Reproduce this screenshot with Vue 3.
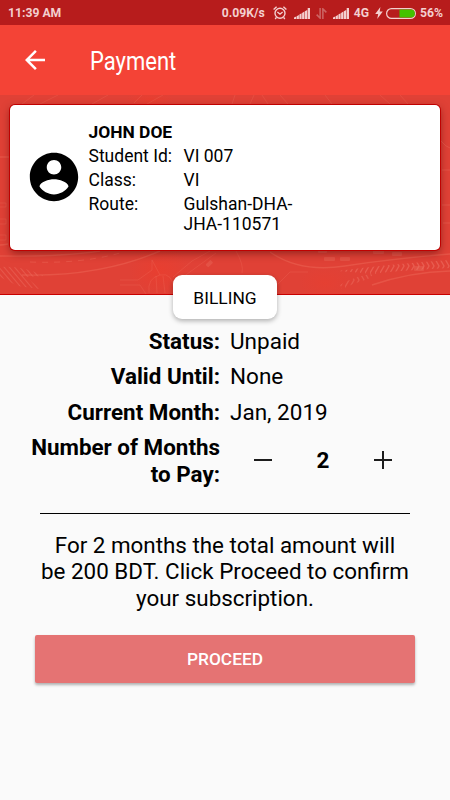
<template>
  <div class="screen">
    <div class="status-bar">
      <span class="time">11:39 AM</span>
      <div class="status-icons">
        <span class="speed">0.09K/s</span>
        <svg class="alarm" viewBox="0 0 14 14" fill="none" stroke="#f3cfcf" stroke-width="1.4">
          <circle cx="7" cy="7.3" r="5" />
          <path d="M4.4 6 7 8.2 9.6 6M.6 3.5 3.6.8M13.4 3.5 10.4.8M3.4 11.4 2.2 13M10.6 11.4 11.8 13" />
        </svg>
        <svg class="signal" viewBox="0 0 16 11" fill="#f3cfcf">
          <path d="M0 11V9.6L2.2 8.6V11zM2.7 11V8.2L4.9 7V11zM5.4 11V6.6L7.6 5.3V11zM8.1 11V4.9L10.4 3.6V11zM10.9 11V3.2L13.2 1.9V11zM13.7 11V0H16V11z" />
        </svg>
        <svg class="data" viewBox="0 0 12 12" fill="none" stroke="#cc6463" stroke-width="1.7">
          <path d="M4.5 0V11L.7 7.2M7.5 12V1L11.3 4.8" />
        </svg>
        <svg class="signal" viewBox="0 0 16 11" fill="#f3cfcf">
          <path d="M0 11V9.6L2.2 8.6V11zM2.7 11V8.2L4.9 7V11zM5.4 11V6.6L7.6 5.3V11zM8.1 11V4.9L10.4 3.6V11zM10.9 11V3.2L13.2 1.9V11zM13.7 11V0H16V11z" />
        </svg>
        <span class="network">4G</span>
        <svg class="bolt" viewBox="0 0 8 12" fill="#f3cfcf">
          <path d="M5.4 0 .2 7H3.2L2.2 12 7.8 4.6H4.7z" />
        </svg>
        <svg class="battery" viewBox="0 0 30 11">
          <rect x=".6" y=".6" width="28.8" height="9.8" rx="4.9" fill="none" stroke="#f3cfcf" stroke-width="1.2" />
          <path d="M13.5 1.6H25a3.9 3.9 0 0 1 0 7.8H13.5z" fill="#43c300" />
        </svg>
        <span class="percent">56%</span>
      </div>
    </div>

    <header class="toolbar">
      <svg class="back" viewBox="0 0 24 24" fill="#fff">
        <path d="M20 11H7.83l5.59-5.59L12 4l-8 8 8 8 1.41-1.41L7.83 13H20v-2z" />
      </svg>
      <h1>Payment</h1>
    </header>

    <section class="banner">
      <!-- faint road map drawn behind the student card -->
      <svg class="roads" viewBox="0 0 450 200" fill="none">
        <defs>
          <pattern id="chevrons" width="5" height="14" patternUnits="userSpaceOnUse" patternTransform="translate(0 164)">
            <path d="M0 0 4 7 0 14" fill="none" stroke="#f0796a" stroke-width="1.3" />
          </pattern>
          <pattern id="hatch" width="4" height="4" patternUnits="userSpaceOnUse" patternTransform="rotate(-40)">
            <path d="M0 0V4" stroke="#f0796a" stroke-width="1.6" />
          </pattern>
          <radialGradient id="glow">
            <stop offset="0" stop-color="#f03c2a" stop-opacity=".5" />
            <stop offset="1" stop-color="#f03c2a" stop-opacity="0" />
          </radialGradient>
        </defs>
        <ellipse cx="160" cy="176" rx="30" ry="26" fill="url(#glow)" />
        <ellipse cx="325" cy="188" rx="26" ry="16" fill="url(#glow)" opacity=".6" />
        <ellipse cx="150" cy="5" rx="24" ry="9" fill="url(#glow)" />
        <path d="M0 172Q22 170 44 181L26 182 40 194 18 191 0 182z" fill="url(#hatch)" opacity=".5" />
        <path d="M338 176Q390 169 450 165V173Q390 176 374 179z" fill="url(#chevrons)" opacity=".5" />
        <path d="M340 190Q356 180 374 179L368 184Q354 188 342 194z" fill="url(#chevrons)" opacity=".4" />
        <g stroke="#f0705f" stroke-opacity=".4">
          <path d="M0 62H10M0 150Q3 150 8 149M0 161Q60 162 100 156M22 180Q100 182 160 156" stroke-width="1.4" />
          <path d="M30 167Q80 169 120 158" stroke-dasharray="6 6" />
          <path d="M270 157Q300 178 345 171T450 159M372 190Q410 177 450 176" stroke-width="1.4" />
          <path d="M441 46Q446 52 450 53M442 75H450M442 110H450M443 128H450" />
        </g>
        <g stroke="#f0705f" stroke-opacity=".28">
          <path d="M120 185H138L152 175V165M120 190H140L146 199M152 165 160 180M173 182 192 166 210 156M183 182 216 158M236 156Q244 170 242 178M278 189 290 177 308 177" />
          <path d="M149 198Q147 183 160 180T174 196M157 198 156 181M165 198 163 181" />
          <path d="M22 9 34 0M40 9 58 0M92 9 108 0M134 8 142 0M147 9 163 0M232 9 235 0M250 9 254 0M262 0 268 9M280 0 288 9M325 0 332 9M380 0 390 9M400 0 408 9" />
          <path d="M0 108H6V112H0M0 124H6V129H0M0 140H6V145H0" />
        </g>
        <g fill="#f0796a" fill-opacity=".3">
          <rect x="304" y="153" width="8" height="3" rx="1" />
          <rect x="318" y="154" width="9" height="4" rx="1" />
          <rect x="324" y="162" width="11" height="4" rx="1" />
          <rect x="340" y="162" width="10" height="4" rx="1" />
          <rect x="373" y="155" width="11" height="4" rx="1" />
          <rect x="392" y="157" width="10" height="4" rx="1" />
          <rect x="414" y="171" width="10" height="5" rx="1" />
          <rect x="206" y="167" width="7" height="4" rx="1" transform="rotate(-45 209 169)" />
        </g>
      </svg>
      <div class="card">
        <svg class="avatar" viewBox="0 0 24 24">
          <path d="M12 2C6.48 2 2 6.48 2 12s4.48 10 10 10 10-4.48 10-10S17.52 2 12 2zm0 3c1.66 0 3 1.34 3 3s-1.34 3-3 3-3-1.34-3-3 1.34-3 3-3zm0 14.2c-2.5 0-4.71-1.28-6-3.22.03-1.99 4-3.08 6-3.08 1.99 0 5.97 1.09 6 3.08-1.29 1.94-3.5 3.22-6 3.22z" />
        </svg>
        <div class="student">
          <div class="name">JOHN DOE</div>
          <div v-for="item in student" :key="item.label" class="student-row">
            <span class="student-label">{{ item.label }}</span>
            <span class="student-value">{{ item.value }}</span>
          </div>
        </div>
      </div>
    </section>

    <div class="badge">BILLING</div>

    <main class="billing">
      <div v-for="item in billing" :key="item.label" class="row">
        <span class="label">{{ item.label }}</span>
        <span class="value">{{ item.value }}</span>
      </div>
      <div class="row">
        <span class="label">Number of Months<br />to Pay:</span>
        <div class="stepper">
          <button class="step" aria-label="Decrease" @click="decrease">
            <svg viewBox="0 0 18 18"><path d="M0 9H18" /></svg>
          </button>
          <span class="count">{{ months }}</span>
          <button class="step" aria-label="Increase" @click="months++">
            <svg viewBox="0 0 18 18"><path d="M0 9H18M9 0V18" /></svg>
          </button>
        </div>
      </div>
    </main>

    <div class="divider"></div>

    <p class="summary">
      For {{ months }} months the total amount will<br />
      be {{ total }} BDT. Click Proceed to confirm<br />
      your subscription.
    </p>

    <button class="proceed">PROCEED</button>
  </div>
</template>

<script setup>
import { computed, ref } from 'vue'

const pricePerMonth = 100

const student = [
  { label: 'Student Id:', value: 'VI 007' },
  { label: 'Class:', value: 'VI' },
  { label: 'Route:', value: 'Gulshan-DHA-JHA-110571' },
]

const billing = [
  { label: 'Status:', value: 'Unpaid' },
  { label: 'Valid Until:', value: 'None' },
  { label: 'Current Month:', value: 'Jan, 2019' },
]

const months = ref(2)
const total = computed(() => months.value * pricePerMonth)

const decrease = () => {
  if (months.value > 1) {
    months.value--
  }
}
</script>

<style>
body {
  background: #fafafa;
}
</style>

<style scoped>
.screen {
  width: 450px;
  height: 800px;
  overflow: hidden;
  display: flex;
  flex-direction: column;
  background: #fafafa;
  color: #000;
  font-family: Roboto, sans-serif;
}

button {
  font-family: inherit;
  border: none;
  padding: 0;
  cursor: pointer;
}

svg {
  display: block;
  flex: none;
}

.status-bar {
  height: 25px;
  flex: none;
  box-sizing: border-box;
  padding: 1px 7px 0 8px;
  display: flex;
  align-items: center;
  justify-content: space-between;
  background: #b71c1c;
  color: #f3cfcf;
  font-size: 12.2px;
  font-weight: 700;
}

.status-icons {
  display: flex;
  align-items: center;
}

.alarm {
  width: 14px;
  height: 14px;
  margin-left: 8px;
}

.signal {
  width: 16px;
  height: 11px;
  margin-left: 7px;
}

.data {
  width: 11px;
  height: 11px;
  margin-left: 6px;
}

.data + .signal {
  margin-left: 6px;
}

.network {
  margin-left: 5px;
}

.bolt {
  width: 8px;
  height: 12px;
  margin-left: 6px;
}

.battery {
  width: 30px;
  height: 11px;
  margin-left: 3px;
}

.percent {
  margin-left: 4px;
}

.toolbar {
  height: 70px;
  flex: none;
  display: flex;
  align-items: center;
  background: #f44336;
}

.back {
  width: 30px;
  height: 30px;
  margin-left: 20px;
}

h1 {
  margin: 2px 0 0 40px;
  color: #fff;
  font-size: 25px;
  font-weight: 400;
  transform: scaleX(0.88);
  transform-origin: left;
}

.banner {
  height: 200px;
  flex: none;
  box-sizing: border-box;
  padding: 10px;
  position: relative;
  background: #e04136;
  border-bottom: 1px solid #c80000;
}

.roads {
  position: absolute;
  top: 0;
  left: 0;
  width: 450px;
  height: 200px;
}

.card {
  position: relative;
  height: 145px;
  box-sizing: border-box;
  padding: 17px 19px 0 15px;
  display: flex;
  background: #fff;
  border-radius: 5px;
  box-shadow: 0 0 0 1px #c00000, 0 3px 8px rgba(60, 0, 0, 0.5);
}

.avatar {
  width: 58px;
  height: 58px;
  margin-top: 26px;
}

.student {
  margin-left: 5.5px;
  font-size: 17.5px;
  line-height: 20px;
}

.name {
  font-size: 17.4px;
  font-weight: 700;
  margin-bottom: 4px;
}

.student-row {
  display: flex;
  margin-bottom: 4px;
}

.student-label {
  width: 95px;
}

.student-value {
  width: 125px;
}

.badge {
  position: relative;
  align-self: center;
  width: 104px;
  height: 44px;
  margin-top: -20px;
  border-radius: 9px;
  background: #fff;
  box-shadow: 0 2px 5px rgba(0, 0, 0, 0.3);
  font-size: 17.4px;
  line-height: 46px;
  text-align: center;
}

.billing {
  margin-top: 9px;
  font-size: 22.5px;
  line-height: 26.4px;
}

.row {
  display: flex;
  gap: 10px;
  margin-bottom: 9px;
}

.label {
  width: 220px;
  font-size: 22.4px;
  font-weight: 700;
  text-align: right;
  white-space: nowrap;
}

.stepper {
  flex: 1;
  display: flex;
  align-items: center;
  padding: 0 58px 2px 24px;
  justify-content: space-between;
}

.step {
  width: 18px;
  height: 18px;
  background: none;
}

.step path {
  fill: none;
  stroke: #1c1c1c;
  stroke-width: 2;
}

.count {
  padding-top: 2px;
  font-weight: 700;
}

.divider {
  height: 1px;
  flex: none;
  margin: 17px 40px 0;
  background: #000;
}

.summary {
  margin: 18px 0 0;
  font-size: 22.4px;
  line-height: 26.4px;
  text-align: center;
}

.proceed {
  height: 48px;
  flex: none;
  margin: 24px 35px 0;
  border-radius: 2px;
  background: #e57373;
  box-shadow: 0 2px 3px rgba(0, 0, 0, 0.3);
  color: #fff;
  font-size: 17.3px;
  font-weight: 500;
}
</style>
